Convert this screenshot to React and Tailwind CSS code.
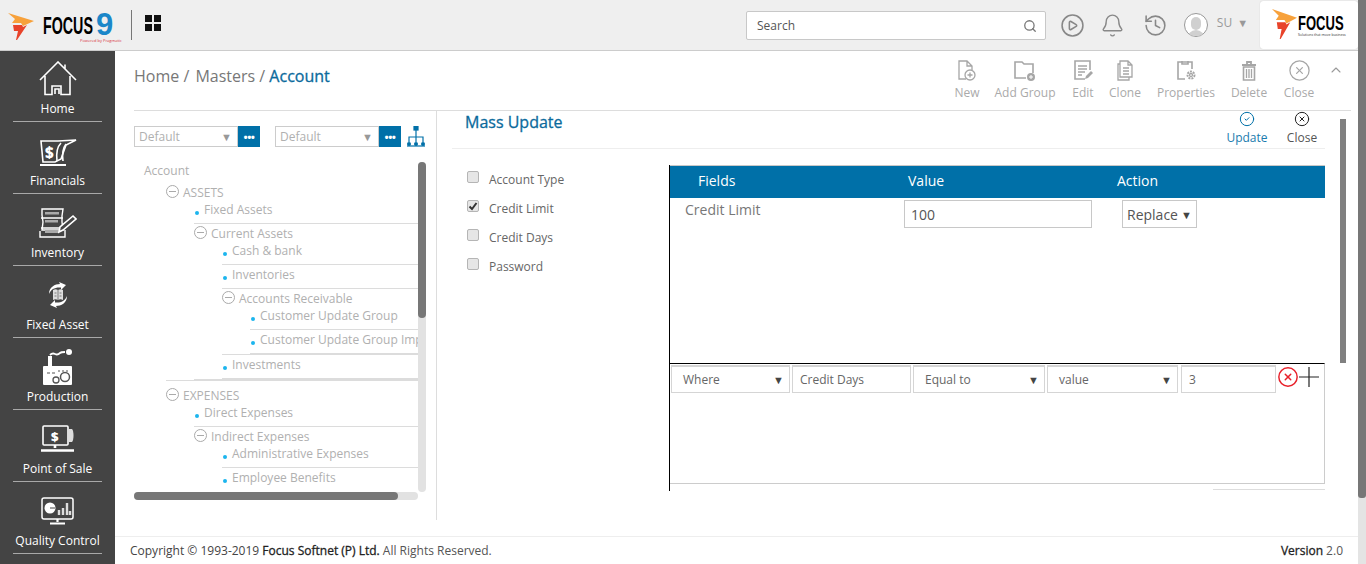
import React from "react";
import { Search, Bell, History, CirclePlay, CircleCheck, CircleX, ChevronUp } from "lucide-react";

const FONT = "font-['Open_Sans',sans-serif]";

// --- Logos ---
const FocusMark = ({ className = "" }) => (
  <svg viewBox="0 0 26 28" className={className} preserveAspectRatio="none">
    <polygon points="0,0 26,8 15,13 13,10 4,10 7,6" fill="#f7a13b" />
    <polygon points="5,12 14,12 15,14 19,12 9,27 8,27 10,18 6,18" fill="#e8432a" />
  </svg>
);

const Focus9Logo = () => (
  <div className="flex items-center w-[115px] shrink-0 relative h-full pl-[8px]">
    <FocusMark className="w-[26px] h-[28px] mt-[3px]" />
    <span className="ml-[9px] w-[50px] text-[23px] leading-none font-bold text-black font-['Liberation_Sans',sans-serif] scale-x-[0.62] origin-left whitespace-nowrap mt-[3px]">
      FOCUS
    </span>
    <span className="ml-[3px] text-[31px] leading-[22px] font-bold text-[#1b87c9] font-['Liberation_Sans',sans-serif]">9</span>
    <span className="absolute left-[80px] top-[38px] text-[4px] leading-[5px] text-[#d8323c] whitespace-nowrap">Powered by Pragmatic</span>
  </div>
);

const BrandBox = () => (
  <div className="w-[98px] h-[48px] mt-[1px] ml-[12px] bg-white rounded-[3px] flex items-center shrink-0 pl-[12px] shadow-[0_0_1px_#bbb]">
    <FocusMark className="w-[25px] h-[31px] -mt-[2px]" />
    <div className="flex flex-col ml-px">
      <span className="w-[45px] text-[21px] leading-[18px] font-bold text-black font-['Liberation_Sans',sans-serif] scale-x-[0.62] origin-left whitespace-nowrap">
        FOCUS
      </span>
      <span className="text-[3.5px] leading-[5px] text-[#333] whitespace-nowrap">Solutions that move business</span>
    </div>
  </div>
);

const AppsIcon = () => (
  <svg viewBox="0 0 16 16" className="w-[16px] h-[16px]">
    <rect x="0" y="0" width="7" height="7" fill="#111" />
    <rect x="9" y="0" width="7" height="7" fill="#111" />
    <rect x="0" y="9" width="7" height="7" fill="#111" />
    <rect x="9" y="9" width="7" height="7" fill="#111" />
  </svg>
);

// --- Sidebar icons ---
const HomeIcon = () => (
  <svg viewBox="0 0 38 35" width="38" height="35" fill="none" stroke="#fff" strokeWidth="1.6">
    <path d="M1 19 19 1l18 18M26 8V3.500M6 15v18.500h7V25h9v8.500h9V15" />
    <path d="M16 33v-5h4v5" />
  </svg>
);
const FinancialsIcon = () => (
  <svg viewBox="0 0 38 28" width="38" height="28" fill="none" stroke="#fff" strokeWidth="1.6">
    <path d="M2 3h17l18-1-10 5-5 14-6 3H4z" />
    <path d="M22 5c-4 4-5 10-4 18M27 6c-3 4-4 10-3 17" />
    <text x="6" y="20" fontSize="15" fontWeight="800" fill="#fff" stroke="none" fontFamily="Open Sans">$</text>
    <path d="M1 27h26" strokeWidth="2" />
  </svg>
);
const InventoryIcon = () => (
  <svg viewBox="0 0 38 30" width="38" height="30" fill="none" stroke="#fff" strokeWidth="1.400">
    <path d="M3 1h21l-1 7v6l1 8H3l1-8-1-7z" fill="#444" />
    <path d="M2 10h22M2 20h22" />
    <rect x="6" y="4" width="14" height="2.500" fill="#aaa" stroke="none" />
    <rect x="6" y="12" width="13" height="2.500" fill="#aaa" stroke="none" />
    <rect x="6" y="22" width="14" height="3" fill="#aaa" stroke="none" />
    <path d="M1 23v6h25v-7" />
    <path d="M20 24l1-5 13-11 3 3-13 11z" fill="#444" strokeWidth="1.600" />
  </svg>
);
const FixedAssetIcon = () => (
  <svg viewBox="0 0 24 26" width="24" height="26" fill="none">
    <path d="M3 12C3 5 9 2 14 2l-1-2 7 3-5 5V5.500C9 5 5 7 3 12z" fill="#fff" />
    <path d="M21 14c0 7-6 10-11 10l1 2-7-3 5-5v2.500c6 .5 10-1.500 12-6.500z" fill="#fff" />
    <path d="M7 8c2-1 3-1 5 0 2-1 3-1 5 0v10c-2-1-3-1-5 0-2-1-3-1-5 0z" fill="#ddd" />
    <path d="M12 8v10M8.500 11h2M8.500 14h2M13.500 11h2M13.500 14h2" stroke="#666" strokeWidth=".8" />
  </svg>
);
const ProductionIcon = () => (
  <svg viewBox="0 0 30 36" width="30" height="36" fill="none">
    <path d="M5 20V7h4v13z" fill="#fff" />
    <path d="M7 6c2-2 3-2 5-1s4 0 5-1 3-1 5-1" stroke="#fff" strokeWidth="1.800" />
    <circle cx="26" cy="3" r="3" fill="#fff" />
    <rect x="0" y="17" width="29" height="19" rx="1" fill="#fff" />
    <path d="M4 24h3M9 24h3M15 22h2M19 22h2M23 22h2" stroke="#555" strokeWidth="1.200" />
    <circle cx="22" cy="28" r="4.500" stroke="#555" strokeWidth="1.500" />
    <circle cx="13" cy="31" r="3" stroke="#555" strokeWidth="1.300" />
  </svg>
);
const PosIcon = () => (
  <svg viewBox="0 0 36 27" width="36" height="27" fill="none" stroke="#fff" strokeWidth="1.600">
    <rect x="3" y="1" width="25" height="19" rx="1" />
    <path d="M28 4h4c2 2 2 11 0 13h-4z" fill="#ddd" stroke="none" />
    <path d="M15 20v3M1 25.500h33" strokeWidth="2.600" />
    <text x="11" y="16" fontSize="13" fontWeight="800" fill="#fff" stroke="none" fontFamily="Open Sans">$</text>
  </svg>
);
const QualityIcon = () => (
  <svg viewBox="0 0 33 28" width="33" height="28" fill="none" stroke="#fff" strokeWidth="1.500">
    <rect x="1" y="1" width="31" height="21" rx="2" />
    <circle cx="9" cy="11" r="5.500" fill="#fff" stroke="none" />
    <path d="M9 11h5" stroke="#444" strokeWidth="1" />
    <path d="M18 18v-5M22 18v-7M26 18V6M29 18v-4" stroke="#ddd" strokeWidth="2.400" />
    <path d="M16.500 22v3M9 26.500h15" strokeWidth="2.200" />
  </svg>
);

const NAV = [
  { label: "Home", Icon: HomeIcon, top: "h-[71px]", pad: "pb-[4px]" },
  { label: "Financials", Icon: FinancialsIcon, top: "h-[72px]", pad: "pb-[6px]" },
  { label: "Inventory", Icon: InventoryIcon, top: "h-[72px]", pad: "pb-[6px]" },
  { label: "Fixed Asset", Icon: FixedAssetIcon, top: "h-[72px]", pad: "pb-[8px]" },
  { label: "Production", Icon: ProductionIcon, top: "h-[72px]", pad: "pb-[3px]" },
  { label: "Point of Sale", Icon: PosIcon, top: "h-[72px]", pad: "pb-[8px]" },
  { label: "Quality Control", Icon: QualityIcon, top: "h-[72px]", pad: "pb-[7px]" },
];

const Sidebar = () => (
  <aside className="w-[115px] shrink-0 bg-[#444444] flex flex-col px-[13px]">
    {NAV.map(({ label, Icon, top, pad }) => (
      <div key={label} className={`${top} shrink-0 flex flex-col items-center justify-end border-b border-[#a9a9a9] pb-[3px]`}>
        <div className={`flex justify-center items-end ${pad}`}>
          <Icon />
        </div>
        <span className="text-[12px] leading-[18px] text-white whitespace-nowrap">{label}</span>
      </div>
    ))}
  </aside>
);

// --- Toolbar icons ---
const stroke = { fill: "none", stroke: "#a6a6a6", strokeWidth: 1.3 };
const NewIcon = () => (
  <svg viewBox="0 0 20 22" width="20" height="22" {...stroke}>
    <path d="M9 19H2V1h8l5 5v4M10 1v5h5" />
    <circle cx="13" cy="15" r="5" />
    <path d="M13 12.500v5M10.500 15h5" />
  </svg>
);
const AddGroupIcon = () => (
  <svg viewBox="0 0 22 20" width="22" height="20" {...stroke}>
    <path d="M12 17H1V1h7l2 2h9v9" strokeWidth="1.600" />
    <circle cx="17" cy="16" r="4" fill="#a6a6a6" stroke="none" />
    <path d="M17 14v4M15 16h4" stroke="#fff" strokeWidth="1" />
  </svg>
);
const EditIcon = () => (
  <svg viewBox="0 0 20 21" width="20" height="21" {...stroke}>
    <path d="M12 19H2V1h15v9" strokeWidth="1.600" />
    <path d="M5 6h9M5 9h9M5 12h7M5 15h4" />
    <path d="M12 19l1-3 5-5 2 2-5 5z" fill="#a6a6a6" stroke="none" />
  </svg>
);
const CloneIcon = () => (
  <svg viewBox="0 0 18 21" width="18" height="21" {...stroke}>
    <path d="M4 1h8l4 4v12H4zM12 1v4h4" />
    <path d="M4 4H2v16h11v-3" />
    <path d="M7 8h6M7 11h6M7 14h6" />
  </svg>
);
const PropertiesIcon = () => (
  <svg viewBox="0 0 21 21" width="21" height="21" {...stroke}>
    <path d="M9 19H2V2h14v7" strokeWidth="1.600" />
    <path d="M6 1v3h6V1" strokeWidth="1.600" />
    <circle cx="15" cy="15" r="3.500" strokeWidth="2" strokeDasharray="2 1" />
    <circle cx="15" cy="15" r="1.500" />
  </svg>
);
const DeleteIcon = () => (
  <svg viewBox="0 0 16 20" width="16" height="20" {...stroke}>
    <path d="M1 4h14M6 3V1h4v2" strokeWidth="1.800" />
    <path d="M2.500 6h11v13h-11z" strokeWidth="1.600" />
    <path d="M5.500 8v9M8 8v9M10.500 8v9" />
  </svg>
);

const TOOLS = [
  { label: "New", Icon: NewIcon, w: "w-[28px]", ml: "ml-0" },
  { label: "Add Group", Icon: AddGroupIcon, w: "w-[62px]", ml: "ml-[13px]" },
  { label: "Edit", Icon: EditIcon, w: "w-[24px]", ml: "ml-[15px]" },
  { label: "Clone", Icon: CloneIcon, w: "w-[34px]", ml: "ml-[13px]" },
  { label: "Properties", Icon: PropertiesIcon, w: "w-[60px]", ml: "ml-[14px]" },
  { label: "Delete", Icon: DeleteIcon, w: "w-[36px]", ml: "ml-[15px]" },
  { label: "Close", Icon: () => <CircleX size={23} strokeWidth={1.3} color="#a6a6a6" />, w: "w-[32px]", ml: "ml-[16px]" },
];

// --- Tree ---
const TREE = [
  { label: "ASSETS", top: true, children: [
    { label: "Fixed Assets" },
    { label: "Current Assets", children: [
      { label: "Cash & bank" },
      { label: "Inventories" },
      { label: "Accounts Receivable", children: [
        { label: "Customer Update Group" },
        { label: "Customer Update Group Import" },
      ] },
      { label: "Investments" },
    ] },
  ] },
  { label: "EXPENSES", top: true, children: [
    { label: "Direct Expenses" },
    { label: "Indirect Expenses", children: [
      { label: "Administrative Expenses" },
      { label: "Employee Benefits" },
    ] },
  ] },
];

const TreeNode = ({ node }) => {
  if (!node.children) {
    return (
      <li className="h-[24px] border-b border-[#dcdcdc] flex items-start pl-px">
        <span className="w-[4px] h-[4px] rounded-full bg-[#1cb5ee] mt-[11px] shrink-0" />
        <span className="ml-[5px] leading-[20px] text-[#b0b0b0] whitespace-nowrap">{node.label}</span>
      </li>
    );
  }
  return (
    <li className="border-b border-[#dcdcdc]">
      <div className={`flex items-start ${node.top ? "h-[22px] pt-[5px]" : "h-[17px]"}`}>
        <span className="w-[13px] h-[13px] mt-[2px] rounded-full border border-[#aaaaaa] flex items-center justify-center shrink-0">
          <span className="w-[7px] h-px bg-[#aaaaaa]" />
        </span>
        <span className="ml-[4px] leading-[20px] text-[#b0b0b0] whitespace-nowrap">{node.label}</span>
      </div>
      <ul className="pl-[28px]">
        {node.children.map((c) => (
          <TreeNode key={c.label} node={c} />
        ))}
      </ul>
    </li>
  );
};

const DefaultSelect = () => (
  <div className="flex w-[126px] h-[21px]">
    <div className="flex-1 border border-[#cccccc] flex items-center justify-between pl-[4px] pr-[5px] text-[#b0b0b0]">
      <span>Default</span>
      <span className="text-[11px] leading-none text-[#999]">▼</span>
    </div>
    <div className="w-[22px] bg-[#0070a8] flex items-center justify-center text-white text-[11px] font-bold leading-none tracking-[-0.5px]">•••</div>
  </div>
);

const OrgIcon = () => (
  <svg viewBox="0 0 18 21" width="18" height="21" fill="none" stroke="#0070a8" strokeWidth="1.200">
    <rect x="7" y="0" width="4" height="4" fill="#0070a8" />
    <path d="M9 4v12M2 16v-5h14v5" />
    <circle cx="2" cy="18" r="2" fill="#0070a8" stroke="none" />
    <circle cx="9" cy="18" r="2" fill="#0070a8" stroke="none" />
    <circle cx="16" cy="18" r="2" fill="#0070a8" stroke="none" />
    <path d="M0 20h18" />
  </svg>
);

const LeftPanel = () => (
  <section className="w-[322px] shrink-0 border-r border-[#dddddd] h-[409px] pl-[19px] pt-[15px] text-[12px]">
    <div className="flex items-start">
      <DefaultSelect />
      <div className="ml-[15px]"><DefaultSelect /></div>
      <div className="ml-[6px]"><OrgIcon /></div>
    </div>
    <div className="flex mt-[14px] h-[331px]">
      <div className="w-[284px] h-[330px] overflow-hidden pl-[10px] text-[12px] pt-[2px]">
        <div className="leading-[16px] -mb-px text-[#b0b0b0]">Account</div>
        <ul className="pl-[22px] w-[400px]">
          {TREE.map((n) => (
            <TreeNode key={n.label} node={n} />
          ))}
        </ul>
      </div>
      <div className="w-[8px] h-[330px] mt-px rounded-[4px] bg-[#e2e2e2]">
        <div className="h-[156px] rounded-[4px] bg-[#777777]" />
      </div>
    </div>
    <div className="w-[284px] h-[8px] rounded-[4px] bg-[#e2e2e2]">
      <div className="w-[264px] h-full rounded-[4px] bg-[#777777]" />
    </div>
  </section>
);

const FIELDS = [
  { label: "Account Type", checked: false },
  { label: "Credit Limit", checked: true },
  { label: "Credit Days", checked: false },
  { label: "Password", checked: false },
];

const Checkbox = ({ checked }) => (
  <span className="w-[12px] h-[12px] rounded-[2px] border border-[#b5b5b5] bg-[#e6e6e6] flex items-center justify-center shrink-0 -mt-[5px]">
    {checked && (
      <svg viewBox="0 0 10 10" width="10" height="10" fill="none" stroke="#333" strokeWidth="2">
        <path d="M1.500 5.500 4 8l4.500-6" />
      </svg>
    )}
  </span>
);

const FilterSelect = ({ label, w, pl, caret = true }) => (
  <div className={`${w} ${pl} h-[28px] shrink-0 border border-[#d5d5d5] border-t-2 flex items-center justify-between pr-[5px] text-[12px] text-[#666]`}>
    <span>{label}</span>
    {caret && <span className="text-[11px] leading-none text-[#444]">▼</span>}
  </div>
);

const RightPanel = () => (
  <section className="flex-1 pl-[15px]">
    <div className="w-[873px] h-[38px] border-b border-[#eeeeee] flex justify-between">
      <h2 className="pl-[13px] text-[16px] leading-[22px] font-medium text-[#0b6a9c] [-webkit-text-stroke:0.3px_#0b6a9c]">Mass Update</h2>
      <div className="flex pr-[7px]">
        <div className="flex flex-col items-center w-[36px]">
          <CircleCheck size={16} strokeWidth={1.5} color="#0070a8" />
          <span className="text-[12px] leading-[16px] mt-[3px] text-[#1a7cae]">Update</span>
        </div>
        <div className="flex flex-col items-center w-[32px] ml-[21px]">
          <CircleX size={16} strokeWidth={1.5} color="#222" />
          <span className="text-[12px] leading-[16px] mt-[3px] text-[#555]">Close</span>
        </div>
      </div>
    </div>
    <div className="flex w-[873px] pt-[16px]">
      <ul className="w-[217px] shrink-0 pl-[15px]">
        {FIELDS.map((f) => (
          <li key={f.label} className="h-[29px] flex items-center text-[12px] text-[#666]">
            <Checkbox checked={f.checked} />
            <span className="ml-[10px] mt-px">{f.label}</span>
          </li>
        ))}
      </ul>
      <div className="flex-1 border-l border-black h-[326px] flex flex-col">
        <div className="h-[33px] shrink-0 bg-[#0070a8] border-t border-[#c8c8c8] flex items-center pl-[28px] pb-[3px] text-[14px] text-white">
          <span className="w-[210px]">Fields</span>
          <span className="w-[209px]">Value</span>
          <span>Action</span>
        </div>
        <div className="h-[165px] shrink-0 flex items-start pt-[2px] pl-[15px] text-[14px] text-[#777]">
          <span className="w-[219px] leading-[20px]">Credit Limit</span>
          <div className="w-[188px] h-[28px] border border-[#c8c8c8] pl-[6px] flex items-center text-[#555]">100</div>
          <div className="w-[75px] h-[28px] ml-[30px] border border-[#c8c8c8] pl-[4px] pr-[4px] flex items-center justify-between text-[#555]">
            <span>Replace</span>
            <span className="text-[11px] leading-none text-[#444]">▼</span>
          </div>
        </div>
        <div className="h-[121px] shrink-0 border-t border-black border-r border-b border-r-[#cccccc] border-b-[#cccccc] flex items-start pl-px pt-px gap-[2px]">
          <FilterSelect label="Where" w="w-[119px]" pl="pl-[11px]" />
          <FilterSelect label="Credit Days" w="w-[119px]" pl="pl-[7px]" caret={false} />
          <FilterSelect label="Equal to" w="w-[132px]" pl="pl-[11px]" />
          <FilterSelect label="value" w="w-[131px]" pl="pl-[11px]" />
          <div className="ml-px"><FilterSelect label="3" w="w-[95px]" pl="pl-[7px]" caret={false} /></div>
          <div className="flex items-center h-[24px] -ml-[1px]">
            <CircleX size={22} strokeWidth={1.6} color="#e8202a" />
            <svg viewBox="0 0 20 20" width="20" height="20" stroke="#222" strokeWidth="1.200">
              <path d="M0 10h20M10 0v20" />
            </svg>
          </div>
        </div>
        <div className="mt-[5px] h-px w-[112px] self-end bg-[#dddddd]" />
      </div>
    </div>
  </section>
);

export default function App() {
  return (
    <div className={`${FONT} w-[1366px] h-[564px] overflow-hidden flex bg-white`}>
      <div className="w-[1358px] flex flex-col shrink-0">
        {/* Top bar */}
        <header className="h-[51px] shrink-0 bg-[#efefef] border-b border-[#cccccc] flex items-start">
          <Focus9Logo />
          <div className="w-px h-[30px] bg-[#777] mt-[10px] ml-[16px]" />
          <div className="ml-[13px] mt-[15px]"><AppsIcon /></div>
          <div className="ml-[585px] mt-[11px] w-[300px] h-[29px] bg-white border border-[#c8c8c8] rounded-[2px] flex items-center justify-between pl-[10px] pr-[8px] text-[12px] text-[#555]">
            <span>Search</span>
            <Search size={14} color="#777" strokeWidth={2.2} />
          </div>
          <div className="ml-[14px] mt-[13px]"><CirclePlay size={25} strokeWidth={1.5} color="#888" /></div>
          <div className="ml-[15px] mt-[13px]"><Bell size={25} strokeWidth={1.3} color="#888" /></div>
          <div className="ml-[18px] mt-[13px]"><History size={25} strokeWidth={1.5} color="#888" /></div>
          <div className="ml-[16px] mt-[13px] w-[24px] h-[24px] rounded-full border border-[#999] bg-white overflow-hidden flex flex-col items-center">
            <span className="w-[10px] h-[13px] rounded-full bg-[#d0d0d0] mt-[3px] shrink-0" />
            <span className="w-[18px] h-[10px] rounded-t-full bg-[#d0d0d0] shrink-0" />
          </div>
          <span className="ml-[9px] mt-[14px] text-[12px] leading-[18px] text-[#999]">SU</span>
          <span className="ml-[5px] mt-[16px] text-[11px] leading-[14px] text-[#999]">▼</span>
          <BrandBox />
        </header>

        <div className="flex-1 flex min-h-0">
          <Sidebar />
          <main className="flex-1 flex flex-col min-w-0">
            {/* Breadcrumb + toolbar */}
            <div className="h-[60px] shrink-0 ml-[19px] mr-[7px] border-b border-[#dddddd] flex items-start justify-between">
              <div className="mt-[13px] text-[16px] leading-[24px] text-[#777]">
                Home / <span className="ml-[2px]">Masters /</span> <span className="font-medium text-[#0b6a9c] [-webkit-text-stroke:0.3px_#0b6a9c]">Account</span>
              </div>
              <div className="flex items-start pr-[7px] mt-[8px]">
                {TOOLS.map(({ label, Icon, w, ml }) => (
                  <div key={label} className={`${w} ${ml} flex flex-col items-center`}>
                    <div className="h-[23px] flex items-center"><Icon /></div>
                    <span className="text-[12px] leading-[16px] mt-[3px] text-[#aaaaaa] whitespace-nowrap">{label}</span>
                  </div>
                ))}
                <ChevronUp size={16} strokeWidth={1.6} color="#999" className="ml-[13px] mt-[3px]" />
              </div>
            </div>

            <div className="flex-1 flex min-h-0 relative">
              <LeftPanel />
              <RightPanel />
              {/* inner scrollbar thumb */}
              <div className="absolute left-[1225px] top-[8px] w-[6px] h-[244px] bg-[#808080]" />
            </div>

            <footer className="h-[28px] shrink-0 border-t border-[#eeeeee] flex items-center justify-between pl-[15px] pr-[15px] text-[12px] text-[#555]">
              <span>
                <span className="text-[#444]">Copyright © 1993-2019</span> <span className="font-medium text-[#222] [-webkit-text-stroke:0.3px_#222]">Focus Softnet (P) Ltd.</span> All Rights Reserved.
              </span>
              <span><span className="font-medium text-[#222] [-webkit-text-stroke:0.3px_#222]">Version</span> 2.0</span>
            </footer>
          </main>
        </div>
      </div>
      {/* Page scrollbar */}
      <div className="w-[8px] h-full bg-[#e4e4e4] shrink-0">
        <div className="h-[498px] bg-[#777777] rounded-b-[3px]" />
      </div>
    </div>
  );
}
